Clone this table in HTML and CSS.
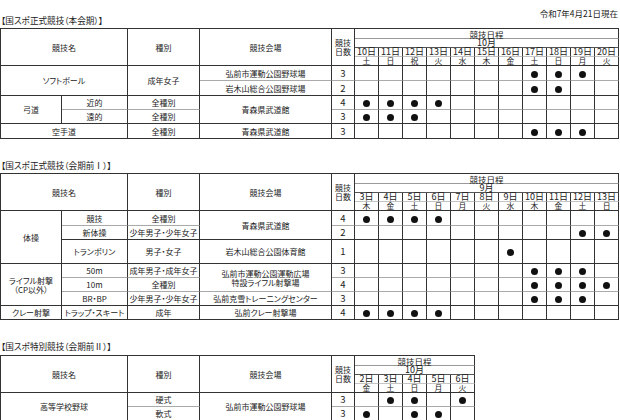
FILE: index.html
```html
<!DOCTYPE html>
<html lang="ja">
<head>
<meta charset="utf-8">
<link rel="stylesheet" href="styles.css">
</head>
<body>
<div class="top">
  <div class="title first">【国スポ正式競技（本会期）】</div>
  <div class="asof">令和7年4月21日現在</div>
</div>
<table class="sched">
  <colgroup><col class="ca"><col class="cb"><col class="cc"><col class="cd"><col class="ce"><col class="cf"><col class="cf"><col class="cf"><col class="cf"><col class="cf"><col class="cf"><col class="cf"><col class="cf"><col class="cf"><col class="cf"><col class="cf"></colgroup>
  <tr class="h1"><td colspan="2" rowspan="4">競技名</td><td rowspan="4">種別</td><td rowspan="4">競技会場</td><td rowspan="4" class="cnth">競技<br>日数</td><td colspan="11" class="gb">競技日程</td></tr>
  <tr class="h2"><td colspan="11" class="mb">10月</td></tr>
  <tr class="h3"><td>10日</td><td>11日</td><td>12日</td><td>13日</td><td>14日</td><td>15日</td><td>16日</td><td>17日</td><td>18日</td><td>19日</td><td>20日</td></tr>
  <tr class="h4"><td>土</td><td>日</td><td>祝</td><td>火</td><td>水</td><td>木</td><td>金</td><td>土</td><td>日</td><td>月</td><td>火</td></tr>
  <tr class="r15 g"><td colspan="2" rowspan="2" class="nb">ソフトボール</td><td rowspan="2" class="nb">成年女子</td><td>弘前市運動公園野球場</td><td class="n">3</td><td></td><td></td><td></td><td></td><td></td><td></td><td></td><td><i></i></td><td><i></i></td><td><i></i></td><td></td></tr>
  <tr class="r15"><td>岩木山総合公園野球場</td><td class="n">2</td><td></td><td></td><td></td><td></td><td></td><td></td><td></td><td><i></i></td><td><i></i></td><td></td><td></td></tr>
  <tr class="r14 g"><td rowspan="2" class="nb">弓道</td><td>近的</td><td>全種別</td><td rowspan="2" class="nb">青森県武道館</td><td class="n">4</td><td><i></i></td><td><i></i></td><td><i></i></td><td><i></i></td><td></td><td></td><td></td><td></td><td></td><td></td><td></td></tr>
  <tr class="r14"><td>遠的</td><td>全種別</td><td class="n">3</td><td><i></i></td><td><i></i></td><td><i></i></td><td></td><td></td><td></td><td></td><td></td><td></td><td></td><td></td></tr>
  <tr class="r15"><td colspan="2">空手道</td><td>全種別</td><td>青森県武道館</td><td class="n">3</td><td></td><td></td><td></td><td></td><td></td><td></td><td></td><td><i></i></td><td><i></i></td><td><i></i></td><td></td></tr>
</table>

<div class="title second">【国スポ正式競技（会期前Ⅰ）】</div>
<table class="sched">
  <colgroup><col class="ca"><col class="cb"><col class="cc"><col class="cd"><col class="ce"><col class="cf"><col class="cf"><col class="cf"><col class="cf"><col class="cf"><col class="cf"><col class="cf"><col class="cf"><col class="cf"><col class="cf"><col class="cf"></colgroup>
  <tr class="h1"><td colspan="2" rowspan="4">競技名</td><td rowspan="4">種別</td><td rowspan="4">競技会場</td><td rowspan="4" class="cnth">競技<br>日数</td><td colspan="11" class="gb">競技日程</td></tr>
  <tr class="h2"><td colspan="11" class="mb">9月</td></tr>
  <tr class="h3"><td>3日</td><td>4日</td><td>5日</td><td>6日</td><td>7日</td><td>8日</td><td>9日</td><td>10日</td><td>11日</td><td>12日</td><td>13日</td></tr>
  <tr class="h4"><td>木</td><td>金</td><td>土</td><td>日</td><td>月</td><td>火</td><td>水</td><td>木</td><td>金</td><td>土</td><td>日</td></tr>
  <tr class="r15 g"><td rowspan="3" class="nb">体操</td><td>競技</td><td>全種別</td><td rowspan="2" class="nb">青森県武道館</td><td class="n">4</td><td><i></i></td><td><i></i></td><td><i></i></td><td><i></i></td><td></td><td></td><td></td><td></td><td></td><td></td><td></td></tr>
  <tr class="r14"><td>新体操</td><td>少年男子・少年女子</td><td class="n">2</td><td></td><td></td><td></td><td></td><td></td><td></td><td></td><td></td><td></td><td><i></i></td><td><i></i></td></tr>
  <tr class="r24"><td>トランポリン</td><td>男子・女子</td><td>岩木山総合公園体育館</td><td class="n">1</td><td></td><td></td><td></td><td></td><td></td><td></td><td><i></i></td><td></td><td></td><td></td><td></td></tr>
  <tr class="r14 g"><td rowspan="3" class="nb">ライフル射撃<br>（CP以外）</td><td>50m</td><td>成年男子・成年女子</td><td rowspan="2" class="nb gl">弘前市運動公園運動広場<br>特設ライフル射撃場</td><td class="n">3</td><td></td><td></td><td></td><td></td><td></td><td></td><td></td><td><i></i></td><td><i></i></td><td><i></i></td><td></td></tr>
  <tr class="r14 g"><td>10m</td><td>全種別</td><td class="n">4</td><td></td><td></td><td></td><td></td><td></td><td></td><td></td><td><i></i></td><td><i></i></td><td><i></i></td><td><i></i></td></tr>
  <tr class="r14"><td>BR・BP</td><td>少年男子・少年女子</td><td>弘前克雪トレーニングセンター</td><td class="n">3</td><td></td><td></td><td></td><td></td><td></td><td></td><td></td><td><i></i></td><td><i></i></td><td><i></i></td><td></td></tr>
  <tr class="r14"><td>クレー射撃</td><td>トラップ・スキート</td><td>成年</td><td>弘前クレー射撃場</td><td class="n">4</td><td><i></i></td><td><i></i></td><td><i></i></td><td><i></i></td><td></td><td></td><td></td><td></td><td></td><td></td><td></td></tr>
</table>

<div class="title third">【国スポ特別競技（会期前Ⅱ）】</div>
<table class="sched small">
  <colgroup><col class="ca"><col class="cb"><col class="cc"><col class="cd"><col class="ce"><col class="cf"><col class="cf"><col class="cf"><col class="cf"><col class="cf"></colgroup>
  <tr class="h1"><td colspan="2" rowspan="4">競技名</td><td rowspan="4">種別</td><td rowspan="4">競技会場</td><td rowspan="4" class="cnth">競技<br>日数</td><td colspan="5" class="gb">競技日程</td></tr>
  <tr class="h2"><td colspan="5" class="mb">10月</td></tr>
  <tr class="h3"><td>2日</td><td>3日</td><td>4日</td><td>5日</td><td>6日</td></tr>
  <tr class="h4"><td>金</td><td>土</td><td>日</td><td>月</td><td>火</td></tr>
  <tr class="r14 g"><td colspan="2" rowspan="2" class="nb">高等学校野球</td><td>硬式</td><td rowspan="2" class="nb">弘前市運動公園野球場</td><td class="n">3</td><td></td><td><i></i></td><td><i></i></td><td></td><td><i></i></td></tr>
  <tr class="r14"><td>軟式</td><td class="n">3</td><td><i></i></td><td></td><td><i></i></td><td><i></i></td><td></td></tr>
</table>
</body>
</html>
```
FILE: styles.css
```css
html, body {
  margin: 0;
  padding: 0;
  background: #ffffff;
}
body {
  font-family: "Noto Sans CJK JP", "Noto Sans", sans-serif;
  color: #222;
  font-feature-settings: "palt";
}
.top {
  display: flex;
  justify-content: space-between;
  align-items: flex-start;
  width: 618px;
  height: 20px;
  padding-top: 8px;
}
.asof {
  font-size: 8.5px;
  line-height: 10px;
}
.title {
  font-size: 8.6px;
  line-height: 10px;
  padding-left: 1px;
}
.title.first {
  padding-top: 7px;
}
.title.second {
  margin-top: 21px;
  margin-bottom: 3px;
}
.title.third {
  margin-top: 21px;
  margin-bottom: 4px;
}
.sched {
  border-collapse: separate;
  border-spacing: 0;
  table-layout: fixed;
  width: 619px;
  border-top: 1px solid #333;
  border-left: 1px solid #333;
}
.sched.small {
  width: 475px;
}
.ca { width: 61px; }
.cb { width: 66px; }
.cc { width: 72px; }
.cd { width: 132px; }
.ce { width: 23px; }
.cf { width: 24px; }
.sched td {
  padding: 0;
  border-right: 1px solid #333;
  border-bottom: 1px solid #333;
  text-align: center;
  vertical-align: middle;
  font-size: 8px;
  line-height: 9px;
  white-space: nowrap;
  overflow: visible;
}
.sched tr.h1 { height: 10px; }
.sched tr.h2 { height: 8px; }
.sched tr.h3 { height: 9px; }
.sched tr.h4 { height: 9px; }
.sched tr.h1 td.gb {
  font-size: 8.5px;
  line-height: 8px;
}
.sched tr.h2 td,
.sched tr.h3 td {
  font-size: 9px;
  line-height: 8px;
}
.sched tr.h4 td {
  font-size: 7.8px;
  line-height: 8px;
}
.sched tr.h1 td.gb { border-bottom-color: #999; }
.sched tr.h2 td.mb { border-bottom-color: #555; }
.sched tr.h3 td { border-bottom-color: #c4c4c4; }
.sched td.cnth {
  font-size: 8px;
  line-height: 9px;
}
.sched tr.r14 { height: 14px; }
.sched tr.r15 { height: 15px; }
.sched tr.r24 { height: 24px; }
.sched tr.g td { border-bottom-color: #aaa; }
.sched tr.g td.nb { border-bottom-color: #333; }
.sched tr.g td.nb.gl { border-bottom-color: #aaa; }
.sched td.n {
  font-size: 9.5px;
}
.sched td i {
  display: inline-block;
  width: 7px;
  height: 7px;
  border-radius: 50%;
  background: #111;
  vertical-align: middle;
}
```
